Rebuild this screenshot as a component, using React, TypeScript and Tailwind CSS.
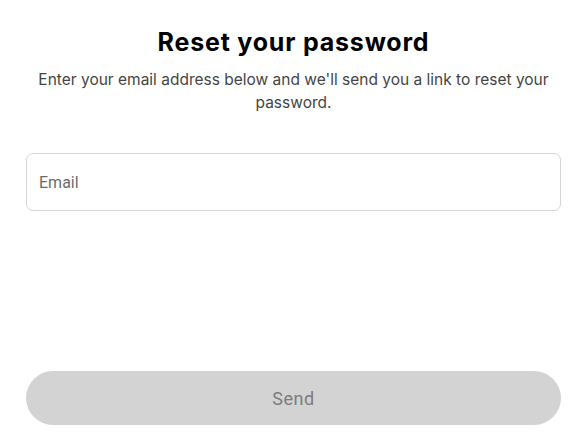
export default function App() {
  return (
    <div className="min-h-screen bg-white px-[26px] pt-[26px] font-['Inter',sans-serif]">
      <h1 className="text-center text-[25px] font-bold leading-[32px] tracking-[0.8px] text-black">
        Reset your password
      </h1>
      <p className="mx-auto mt-[10px] text-center text-[15.5px] leading-[23px] text-[#454545]">
        Enter your email address below and we'll send you a link to reset your password.
      </p>

      <input
        type="email"
        placeholder="Email"
        className="mt-[39px] block h-[58px] w-full rounded-[7px] border border-[#d6d6d6] px-[12px] font-['Roboto',sans-serif] text-[16px] text-black outline-none placeholder:text-[#6b6b6b]"
      />

      <button
        disabled
        className="mt-[160px] block h-[54px] w-full rounded-full bg-[#d3d3d3] font-['Roboto',sans-serif] text-[18px] font-normal tracking-[0.6px] text-[#7c7c7c]"
      >
        Send
      </button>
    </div>
  );
}
